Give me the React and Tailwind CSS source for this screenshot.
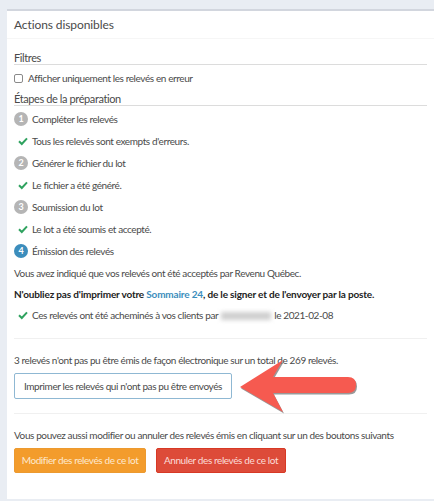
import React from 'react';

const Step = ({ n, label, active }) => (
    <div className="flex items-center h-[22px] gap-[4px]">
        <span className={`flex items-center justify-center w-[14px] h-[14px] rounded-full text-white text-[9px] font-bold ${active ? 'bg-[#3c8dbc]' : 'bg-[#b5b5b5]'}`}>{n}</span>
        <span>{label}</span>
    </div>
);

const Done = ({ children }) => (
    <div className="flex items-center h-[22px] pl-[4px] gap-[4px] whitespace-nowrap">
        <svg width="10" height="10" viewBox="0 0 10 10" className="shrink-0">
            <path d="M1 5.2 L3.8 8 L9 2.4" fill="none" stroke="#2fa25f" strokeWidth="2" />
        </svg>
        <span>{children}</span>
    </div>
);

const App = () => {
    return (
        <div className="relative w-[434px] h-[501px] overflow-hidden bg-[#e9edf3] pt-[9px] text-[10px] tracking-[-0.4px] text-[#4a4a4a] font-['Lato',sans-serif]">
            <div className="ml-[7px] h-[490px] bg-white border-t-2 border-[#d2d6de]">
                <div className="h-[28px] px-[7px] flex items-center text-[12px] tracking-[-0.1px] border-b border-[#f6f6f6]">Actions disponibles</div>

                <div className="px-[7px]">
                    <div className="mt-[12px] text-[11px] leading-[13px] border-b border-[#dcdcdc]">Filtres</div>
                    <label className="flex items-center gap-[5px] h-[27px]">
                        <span className="w-[9px] h-[9px] border border-[#8a8a8a] rounded-[2px] bg-white"></span>
                        Afficher uniquement les relevés en erreur
                    </label>
                    <div className="text-[11px] leading-[13px] border-b border-[#dcdcdc]">Étapes de la préparation</div>

                    <div className="mt-[2px]">
                        <Step n="1" label="Compléter les relevés" />
                        <Done>Tous les relevés sont exempts d'erreurs.</Done>
                        <Step n="2" label="Générer le fichier du lot" />
                        <Done>Le fichier a été généré.</Done>
                        <Step n="3" label="Soumission du lot" />
                        <Done>Le lot a été soumis et accepté.</Done>
                        <Step n="4" label="Émission des relevés" active />
                    </div>

                    <p className="mt-[1px] leading-[20px]">Vous avez indiqué que vos relevés ont été acceptés par Revenu Québec.</p>
                    <p className="mt-[1px] leading-[20px] font-bold tracking-[-0.17px] text-[#222] whitespace-nowrap">
                        N'oubliez pas d'imprimer votre <span className="text-[#3c8dbc]">Sommaire 24</span>, de le signer et de l'envoyer par la poste.
                    </p>
                    <Done>
                        Ces relevés ont été acheminés à vos clients par
                        <span className="inline-block w-[50px] h-[8px] mx-[3px] bg-[#cfcfcf] blur-[2px] align-middle"></span>
                        le 2021-02-08
                    </Done>

                    <div className="mt-[12px] border-t border-[#f0f0f0] pt-[11px] leading-[20px] whitespace-nowrap">
                        3 relevés n'ont pas pu être émis de façon électronique sur un total de 269 relevés.
                    </div>
                    <button className="block mt-[3px] w-[218px] h-[26px] bg-white border border-[#8fb8d3] rounded-[2px] text-center whitespace-nowrap">
                        Imprimer les relevés qui n'ont pas pu être envoyés
                    </button>

                    <div className="mt-[14px] border-t border-[#f0f0f0] pt-[11px] leading-[20px] whitespace-nowrap">
                        Vous pouvez aussi modifier ou annuler des relevés émis en cliquant sur un des boutons suivants
                    </div>
                    <div className="flex gap-[10px] mt-[3px]">
                        <button className="w-[132px] h-[25px] bg-[#f39c2c] border border-[#ec9a30] rounded-[2px] text-[#fde9d0] whitespace-nowrap">Modifier des relevés de ce lot</button>
                        <button className="w-[130px] h-[25px] bg-[#dd4b39] border border-[#d73925] rounded-[2px] text-[#fbdcd8] whitespace-nowrap">Annuler des relevés de ce lot</button>
                    </div>
                </div>
            </div>

            <svg className="absolute left-[238px] top-[358px]" width="122" height="58" viewBox="0 0 122 58">
                <path d="M2 29 L45 2 L35 19 L110 19 Q118 19 118 27 Q118 35 110 35 L35 35 L45 54 Z" fill="#777" transform="translate(1 1.5)" opacity="0.75" />
                <path d="M2 29 L45 2 L35 19 L110 19 Q118 19 118 27 Q118 35 110 35 L35 35 L45 54 Z" fill="#f65a50" />
            </svg>
        </div>
    );
};

export default App;
